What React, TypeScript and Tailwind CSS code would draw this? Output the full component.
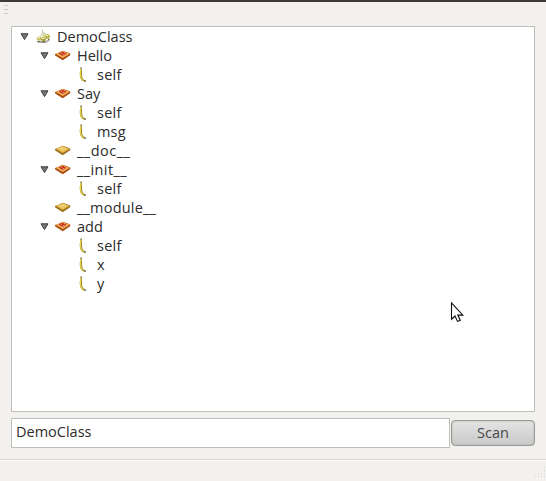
import React from "react";

type Kind = "class" | "method" | "attribute" | "argument";
type Node = { label: string; kind: Kind; depth: string; tracking: string };

const top = "pl-[8px]";
const child = "pl-[28px]";
const leaf = "pl-[48px]";

const nodes: Node[] = [
  { label: "DemoClass", kind: "class", depth: top, tracking: "tracking-[0px]" },
  { label: "Hello", kind: "method", depth: child, tracking: "tracking-[0px]" },
  { label: "self", kind: "argument", depth: leaf, tracking: "tracking-[0.25px]" },
  { label: "Say", kind: "method", depth: child, tracking: "tracking-[0px]" },
  { label: "self", kind: "argument", depth: leaf, tracking: "tracking-[0.25px]" },
  { label: "msg", kind: "argument", depth: leaf, tracking: "tracking-[0.2px]" },
  { label: "__doc__", kind: "attribute", depth: child, tracking: "tracking-[0.5px]" },
  { label: "__init__", kind: "method", depth: child, tracking: "tracking-[0.4px]" },
  { label: "self", kind: "argument", depth: leaf, tracking: "tracking-[0.25px]" },
  { label: "__module__", kind: "attribute", depth: child, tracking: "tracking-[0.2px]" },
  { label: "add", kind: "method", depth: child, tracking: "tracking-[0px]" },
  { label: "self", kind: "argument", depth: leaf, tracking: "tracking-[0.25px]" },
  { label: "x", kind: "argument", depth: leaf, tracking: "tracking-[0px]" },
  { label: "y", kind: "argument", depth: leaf, tracking: "tracking-[0px]" },
];

function Expander() {
  return (
    <svg width="10" height="8" viewBox="0 0 10 8" className="block">
      <path d="M1 .8h7L4.5 6.6z" fill="#777" stroke="#3c3c3c" strokeWidth="1" strokeLinejoin="round" />
    </svg>
  );
}

function KindIcon({ kind }: { kind: Kind }) {
  if (kind === "class") {
    return (
      <svg width="16" height="16" viewBox="0 0 16 16" className="block">
        <path d="M2 12h8l4.500-1.600.4 1-4 2.600H3z" fill="#a8a8a4" />
        <path d="M7.200.8l.6 3L5 7.500M7.800 3.800L11 5" fill="none" stroke="#b5b48c" strokeWidth=".9" />
        <ellipse cx="4.300" cy="9.600" rx="2.500" ry="2.200" fill="#c2bf58" />
        <ellipse cx="8.600" cy="10.200" rx="2.300" ry="2.300" fill="#a8a238" />
        <ellipse cx="8.800" cy="6.800" rx="1.600" ry="1.800" fill="#d9d68c" />
        <ellipse cx="12.500" cy="7.600" rx="2.400" ry="2.500" fill="#b5af40" />
        <path d="M3 8.800h2M7.400 9.400h2M11.400 6.600h1.800" stroke="#f6f5d4" strokeWidth="1.300" />
        <path d="M2.200 12.500h2.200M7 13h3M13 10.400h1.500" stroke="#65684c" />
      </svg>
    );
  }
  if (kind === "argument") {
    return (
      <svg width="16" height="16" viewBox="0 0 16 16" className="block">
        <path d="M6.400.8C7.400 3.600 6.800 7 7.200 9.400c.4 2.200 1.300 3.400 3.600 4.200l-.5.9c-2.500.3-4-.8-4.800-2.900C4.300 8.400 4.700 4 5.700 1z" fill="#94802c" />
        <path d="M6 2.200C5.300 5 5.100 8 6 10.800c.5 1.400 1.300 2.300 2.400 2.700" fill="none" stroke="#ecd84c" strokeWidth="1.200" />
        <path d="M5.500 1h1.200M9.300 14.100h1.600" stroke="#4c4824" />
      </svg>
    );
  }
  return (
    <svg width="16" height="16" viewBox="0 0 16 16" className="block">
      <path d="M0 6l3.500-1.300L7.500 2.800l4 1.300L15.200 5.600v1.600L7.700 12.200.2 7.400z" fill={kind === "method" ? "#a84c12" : "#9c7020"} />
      <path d="M.6 5.700L4 4.700l3.600-1.600 3.500 1.300L14.700 5.800 7.700 10z" fill={kind === "method" ? "#f3b35c" : "#e6ba4c"} />
      {kind === "method" ? (
        <>
          <path d="M3.600 5.600l3.800-1.800 4.200 1.900-4 2.300z" fill="#c4261b" />
          <path d="M5.800 5.800l1.500-.9M7.500 7l2-.9" stroke="#f5c58c" strokeWidth=".8" fill="none" />
        </>
      ) : (
        <path d="M2.800 5.700l4.800-2 4.400 2-4.400 2.200z" fill="#f0cf70" />
      )}
    </svg>
  );
}

function TreeRow({ node }: { node: Node }) {
  const expandable = node.kind === "class" || node.kind === "method";
  return (
    <div className={`flex h-[19px] items-center ${node.depth}`}>
      <span className="mr-[5px] w-[10px] shrink-0">{expandable && <Expander />}</span>
      <KindIcon kind={node.kind} />
      <span className={`ml-[6px] whitespace-nowrap leading-[19px] ${node.tracking}`}>{node.label}</span>
    </div>
  );
}

function Cursor() {
  return (
    <svg width="16" height="24" viewBox="0 0 16 24" className="absolute left-[450px] top-[301px]">
      <path d="M2.5 3v16l3.500-3 2.700 5.500 3-1.400L9.200 15H14z" fill="#000" opacity=".15" />
      <path d="M1.500 1.800v16.400l3.500-3.200 2.500 5.400 2.700-1.200-2.400-5.100h5z" fill="#fff" stroke="#111" strokeWidth="1.1" />
    </svg>
  );
}

export default function App() {
  return (
    <div className="relative flex h-[481px] w-[546px] flex-col overflow-hidden bg-[#f2f1f0] font-['Open_Sans','Noto_Sans',sans-serif] text-[14.5px] text-[#2c2c2c]">
      <div className="h-[2px] shrink-0 bg-[#3c3b37]" />
      <div className="flex h-[24px] shrink-0 flex-col gap-[3px] pl-1 pt-[3px]">
        <div className="h-px w-1 bg-[#cfcecb]" />
        <div className="h-px w-1 bg-[#cfcecb]" />
        <div className="h-px w-1 bg-[#cfcecb]" />
      </div>
      <div className="ml-[11px] h-[386px] w-[524px] shrink-0 border border-[#c0bfba] bg-white">
        {nodes.map((node, i) => (
          <TreeRow key={i} node={node} />
        ))}
      </div>
      <div className="ml-[11px] mt-[6px] flex h-[30px] shrink-0 items-center gap-px">
        <div className="flex h-[30px] w-[439px] items-center border border-[#c0bfba] bg-white pb-[2px] pl-1">
          DemoClass
        </div>
        <button className="h-[26px] w-[84px] rounded-[4px] border border-[#999994] bg-gradient-to-b from-[#e4e4e4] to-[#c9c9c9] leading-[24px] text-[#484848] shadow-[inset_0_0_2px_#aaa]">
          Scan
        </button>
      </div>
      <div className="mt-[11px] h-[2px] shrink-0 border-b border-t border-b-[#fbfbfa] border-t-[#d5d4d1]" />
      <div className="flex flex-1 items-end justify-end pb-[2px]">
        <svg width="11" height="12" viewBox="0 0 11 12">
          <path d="M9 1h1M6 4h1M9 4h1M3 7h1M6 7h1M9 7h1M0 10h1M3 10h1M6 10h1M9 10h1" stroke="#d0cfcc" strokeWidth="1.2" />
          <path d="M10 2h1M7 5h1M10 5h1M4 8h1M7 8h1M10 8h1M1 11h1M4 11h1M7 11h1M10 11h1" stroke="#fff" />
        </svg>
      </div>
      <Cursor />
    </div>
  );
}
